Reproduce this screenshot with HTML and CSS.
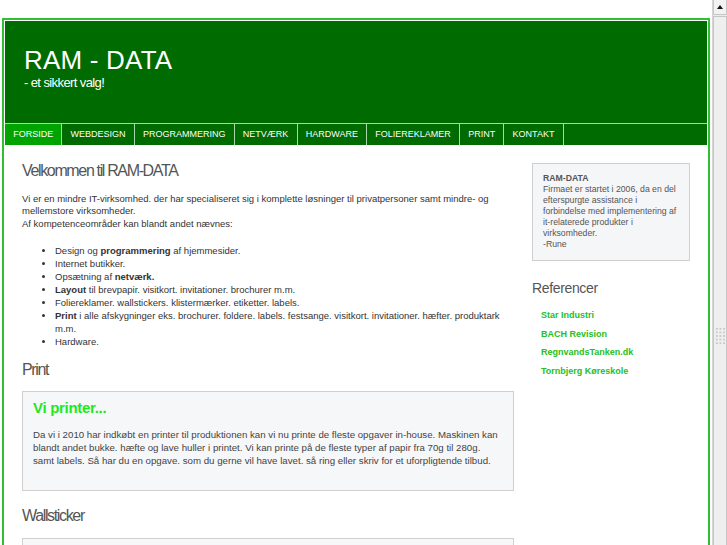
FILE: index.html
```html
<!DOCTYPE html>
<html lang="da">
<head>
<meta charset="utf-8">
<title>RAM - DATA</title>
<link rel="stylesheet" href="styles.css">
</head>
<body>
<div class="viewport">
  <div class="wrap">
    <div class="header">
      <h1 class="logo">RAM - DATA</h1>
      <div class="slogan">- et sikkert valg!</div>
    </div>
    <div class="nav">
      <a class="nav-item active" href="#">FORSIDE</a>
      <a class="nav-item" href="#">WEBDESIGN</a>
      <a class="nav-item" href="#">PROGRAMMERING</a>
      <a class="nav-item" href="#">NETVÆRK</a>
      <a class="nav-item" href="#">HARDWARE</a>
      <a class="nav-item" href="#">FOLIEREKLAMER</a>
      <a class="nav-item" href="#">PRINT</a>
      <a class="nav-item" href="#">KONTAKT</a>
    </div>
    <div class="content">
      <div class="main">
        <h2 class="heading">Velkommen til RAM-DATA</h2>
        <p class="text">Vi er en mindre IT-virksomhed. der har specialiseret sig i komplette løsninger til privatpersoner samt mindre- og mellemstore virksomheder.<br>Af kompetenceområder kan blandt andet nævnes:</p>
        <ul class="list">
          <li>Design og <b>programmering</b> af hjemmesider.</li>
          <li>Internet butikker.</li>
          <li>Opsætning af <b>netværk.</b></li>
          <li><b>Layout</b> til brevpapir. visitkort. invitationer. brochurer m.m.</li>
          <li>Foliereklamer. wallstickers. klistermærker. etiketter. labels.</li>
          <li><b>Print</b> i alle afskygninger eks. brochurer. foldere. labels. festsange. visitkort. invitationer. hæfter. produktark m.m.</li>
          <li>Hardware.</li>
        </ul>
        <h2 class="heading section">Print</h2>
        <div class="box">
          <h3 class="box-title">Vi printer...</h3>
          <p class="box-text">Da vi i 2010 har indkøbt en printer til produktionen kan vi nu printe de fleste opgaver in-house. Maskinen kan blandt andet bukke. hæfte og lave huller i printet. Vi kan printe på de fleste typer af papir fra 70g til 280g. samt labels. Så har du en opgave. som du gerne vil have lavet. så ring eller skriv for et uforpligtende tilbud.</p>
        </div>
        <h2 class="heading section2">Wallsticker</h2>
        <div class="box box2">
          <h3 class="box-title">Wallstickers...</h3>
          <p class="box-text">Vi laver wallstickers i mange farver og størrelser.</p>
        </div>
      </div>
      <div class="side">
        <div class="side-box">
          <div class="side-title">RAM-DATA</div>
          Firmaet er startet i 2006, da en del efterspurgte assistance i forbindelse med implementering af it-relaterede produkter i virksomheder.<br>-Rune
        </div>
        <h2 class="side-heading">Referencer</h2>
        <div class="refs">
          <a class="ref" href="#">Star Industri</a>
          <a class="ref" href="#">BACH Revision</a>
          <a class="ref" href="#">RegnvandsTanken.dk</a>
          <a class="ref" href="#">Tornbjerg Køreskole</a>
        </div>
      </div>
    </div>
  </div>
</div>
<div class="scrollbar">
  <div class="sb-btn"><span class="sb-arrow"></span></div>
  <div class="sb-thumb"><span class="sb-grip"></span></div>
</div>
</body>
</html>
```

FILE: styles.css
```css
html, body {
  margin: 0;
  padding: 0;
  height: 545px;
  overflow: hidden;
  background: #fff;
}

body {
  display: flex;
  font-family: "Liberation Sans", Arial, Helvetica, sans-serif;
  color: #333;
}

.viewport {
  flex: 1;
  padding: 18px 2px 0;
  overflow: hidden;
}

.wrap {
  border: 2px solid #2fbf2f;
  padding: 1px;
  background: #fff;
}

.header {
  background: #006b00;
  height: 102px;
  box-sizing: border-box;
  padding: 24px 0 0 19px;
  color: #fff;
}

.logo {
  margin: 0;
  font-size: 26px;
  line-height: 30px;
  font-weight: normal;
  letter-spacing: 0.2px;
}

.slogan {
  font-size: 13px;
  line-height: 16px;
  letter-spacing: -0.6px;
}

.nav {
  display: flex;
  background: #006b00;
  border-top: 1px solid #a9d5a9;
  height: 21px;
}

.nav-item {
  display: block;
  padding: 0 8.2px;
  line-height: 21px;
  font-size: 9px;
  color: #fff;
  text-decoration: none;
  border-right: 1px solid #a9d5a9;
}

.nav-item.active {
  background: #00a400;
}

.content {
  display: flex;
  gap: 18px;
  padding: 18px 17px 0;
}

.main {
  width: 492px;
  flex: none;
}

.side {
  width: 158px;
  flex: none;
}

.heading {
  margin: 0 0 13.5px;
  font-size: 16px;
  line-height: 16px;
  font-weight: normal;
  color: #555;
  letter-spacing: -1.35px;
}

.heading.section {
  margin-top: 13px;
  margin-bottom: 13px;
}

.heading.section2 {
  margin-top: 17px;
  margin-bottom: 14px;
}

.text {
  margin: 0;
  font-size: 9.5px;
  line-height: 12.8px;
  color: #333;
}

.list {
  margin: 12.9px 0 0;
  padding-left: 33px;
  font-size: 9.5px;
  line-height: 13.1px;
  color: #333;
}

.box {
  border: 1px solid #d0d0d0;
  background: #f6f7f9;
  padding: 8px 14px 23px 10px;
}

.box-title {
  margin: 0 0 12px;
  font-size: 15px;
  line-height: 16px;
  font-weight: bold;
  color: #1ee81e;
  letter-spacing: -0.3px;
}

.box-text {
  margin: 0;
  font-size: 9.7px;
  line-height: 13.3px;
  color: #444;
}

.side-box {
  border: 1px solid #cfcfcf;
  background: #f5f6f8;
  padding: 9px 10px 10px;
  font-size: 8.7px;
  line-height: 11px;
  color: #555;
}

.side-title {
  font-weight: bold;
}

.side-heading {
  margin: 19px 0 0;
  font-size: 14px;
  line-height: 16px;
  font-weight: normal;
  color: #555;
  letter-spacing: -0.35px;
}

.refs {
  margin-top: 10px;
  padding-left: 9px;
}

.ref {
  display: block;
  font-size: 9px;
  line-height: 18.7px;
  font-weight: bold;
  color: #25c025;
  text-decoration: none;
}

.scrollbar {
  width: 15px;
  flex: none;
  background: #ececec;
  border-left: 1px solid #d4d4d4;
  box-sizing: border-box;
  display: flex;
  flex-direction: column;
}

.sb-btn {
  height: 15px;
  flex: none;
  box-sizing: border-box;
  border: 1px solid #c6c6c6;
  border-top: none;
  background: #f2f2f2;
  display: flex;
  align-items: center;
  justify-content: center;
}

.sb-arrow {
  width: 0;
  height: 0;
  border-left: 3.5px solid transparent;
  border-right: 3.5px solid transparent;
  border-bottom: 4px solid #111;
}

.sb-thumb {
  flex: none;
  height: 640px;
  box-sizing: border-box;
  margin-top: 1px;
  border: 1px solid #c6c6c6;
  background: #efefef;
  display: flex;
  align-items: center;
  justify-content: center;
}

.sb-grip {
  width: 11px;
  height: 18px;
  background-image: radial-gradient(circle, #c8c8c8 0.8px, transparent 1px);
  background-size: 3.6px 3.6px;
}
```
